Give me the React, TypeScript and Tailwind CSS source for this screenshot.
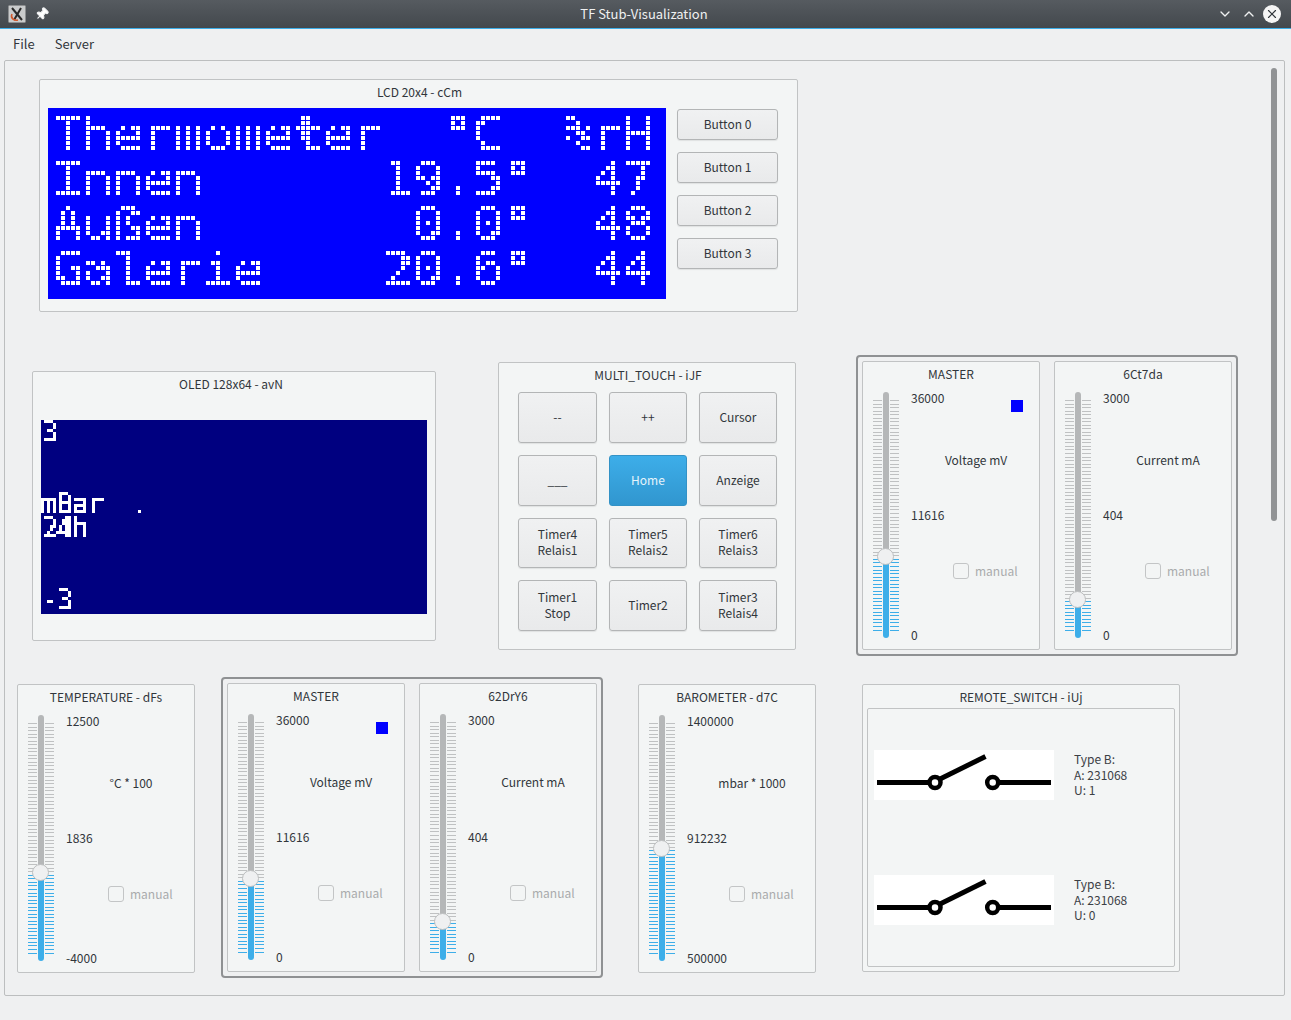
import React from 'react';
import { Pin, X, ChevronDown, ChevronUp } from 'lucide-react';

const TICK_COUNT = 66;

// vertical tick ladder next to a slider, blue below the handle
const Ticks: React.FC<{ fraction: number }> = ({ fraction }) => (
  <div className="flex flex-col justify-between w-[9px] h-[231px] mt-[8px]">
    {Array.from({ length: TICK_COUNT }).map((_, i) => (
      <div
        key={i}
        className={i / (TICK_COUNT - 1) > 1 - fraction ? 'h-px bg-[#3daee9]' : 'h-px bg-[#bfc1c2]'}
      />
    ))}
  </div>
);

const Slider: React.FC<{ fraction: number }> = ({ fraction }) => (
  <div className="relative flex gap-px w-[26px] h-[246px] mt-[2px]">
    <Ticks fraction={fraction} />
    <div className="flex flex-col w-[6px] h-[246px] rounded-full overflow-hidden">
      <div className="flex-1 bg-[#b5b7b8]" />
      <div className="bg-[#3daee9]" style={{ height: Math.round(7 + fraction * 231) }} />
    </div>
    <Ticks fraction={fraction} />
    <div
      className="absolute left-[4px] w-[17px] h-[17px] rounded-full bg-[#eff0f1] border border-[#bcbebf]"
      style={{ top: Math.round(239 - fraction * 231 - 8.5) }}
    />
  </div>
);

interface GaugeProps {
  title: string;
  max: string;
  unit: string;
  value: string;
  min: string;
  fraction: number;
  marker?: boolean;
  className?: string;
}

const Gauge: React.FC<GaugeProps> = ({ title, max, unit, value, min, fraction, marker, className }) => (
  <div className={`w-[178px] h-[289px] shrink-0 border border-[#c1c3c4] rounded-[2px] bg-[#f3f5f5] ${className ?? ''}`}>
    <div className="h-[24px] mb-[4px] flex items-center justify-center">{title}</div>
    <div className="flex pl-[10px] gap-[12px]">
      <Slider fraction={fraction} />
      <div className="flex flex-col w-[130px]">
        <div className="flex justify-between h-4 leading-4">
          <span>{max}</span>
          {marker && <span className="w-[12px] h-[12px] mt-[10px] mr-[16px] bg-[#0000ff]" />}
        </div>
        <div className="h-4 leading-4 mt-[46px] pl-[2px] text-center">{unit}</div>
        <div className="h-4 leading-4 mt-[39px]">{value}</div>
        <div className="flex items-center h-4 leading-4 mt-[40px] ml-[42px] gap-[6px] text-[#a9abac]">
          <span className="w-[16px] h-[16px] rounded-[3px] border border-[#c3c5c6] bg-[#f3f5f5]" />
          manual
        </div>
        <div className="h-4 leading-4 mt-[48px]">{min}</div>
      </div>
    </div>
  </div>
);

const MasterGroup: React.FC<{ title2: string; className?: string; fraction2: number }> = ({ title2, className, fraction2 }) => (
  <div className={`flex gap-[14px] w-[382px] h-[301px] shrink-0 p-[4px] border-2 border-[#8f9193] rounded-[4px] ${className ?? ''}`}>
    <Gauge title="MASTER" max="36000" unit="Voltage mV" value="11616" min="0" fraction={0.3227} marker />
    <Gauge title={title2} max="3000" unit="Current mA" value="404" min="0" fraction={fraction2} />
  </div>
);

const TouchButton: React.FC<{ label: string; active?: boolean }> = ({ label, active }) => (
  <div
    className={
      active
        ? 'flex items-center justify-center text-center leading-4 pb-[2px] rounded-[3px] border border-[#3392c6] bg-gradient-to-b from-[#3daee9] to-[#3196cf] text-[#e6f4fb]'
        : 'flex items-center justify-center text-center leading-4 pb-[2px] rounded-[3px] border border-[#b3b5b6] bg-gradient-to-b from-[#f0f1f2] to-[#e9eaeb] shadow-[0_1px_1px_rgba(0,0,0,0.08)] whitespace-pre-line'
    }
  >
    {label}
  </div>
);

const SwitchDrawing: React.FC = () => (
  <svg width="180" height="50" viewBox="0 0 180 50" className="bg-white shrink-0">
    <path d="M3 32.5H54M125.5 32.5H177" stroke="#000" strokeWidth="5" fill="none" />
    <path d="M66 29L111.5 6.5" stroke="#000" strokeWidth="5" fill="none" />
    <circle cx="61" cy="32.5" r="5.5" stroke="#000" strokeWidth="4.5" fill="#fff" />
    <circle cx="118.7" cy="32.5" r="5.5" stroke="#000" strokeWidth="4.5" fill="#fff" />
  </svg>
);

const RemoteRow: React.FC<{ state: string; className?: string }> = ({ state, className }) => (
  <div className={`flex items-center gap-[20px] ml-[6px] ${className ?? ''}`}>
    <SwitchDrawing />
    <div className="leading-[15.7px] text-[#3b4045] pb-px">
      <div>Type B:</div>
      <div>A: 231068</div>
      <div>U: {state}</div>
    </div>
  </div>
);

const App: React.FC = () => {
  const lcdLines = [
    'Thermometer  °C  %rH',
    'Innen      19.5°  47',
    'Außen       0.0°  48',
    'Galerie    20.6°  44',
  ];

  return (
    <div className="w-[1291px] h-[1020px] overflow-hidden flex flex-col bg-[#eff0f1] text-[#31363b] text-[12px] [font-family:'Noto_Sans_CJK_SC',sans-serif]">
      {/* real text, sampled onto the display's dot grid */}
      <svg className="absolute w-0 h-0">
        <defs>
          <filter id="lcdDots" x="0" y="0" width="1" height="1" colorInterpolationFilters="sRGB">
            <feFlood x="2" y="2" width="1" height="1" floodColor="#fff" />
            <feComposite width="5" height="5" />
            <feTile result="sample" />
            <feComposite in="SourceGraphic" in2="sample" operator="in" />
            <feComponentTransfer>
              <feFuncA type="discrete" tableValues="0 1 1 1" />
            </feComponentTransfer>
            <feMorphology operator="dilate" radius="2" result="big" />
            <feFlood x="0" y="0" width="4" height="4" floodColor="#fff" />
            <feComposite width="5" height="5" />
            <feTile result="cell" />
            <feComposite in="big" in2="cell" operator="in" />
          </filter>
          <filter id="oledDots" x="0" y="0" width="1" height="1" colorInterpolationFilters="sRGB">
            <feFlood x="1" y="1" width="1" height="1" floodColor="#fff" />
            <feComposite width="3" height="3" />
            <feTile result="sample" />
            <feComposite in="SourceGraphic" in2="sample" operator="in" />
            <feComponentTransfer>
              <feFuncA type="discrete" tableValues="0 1 1 1" />
            </feComponentTransfer>
            <feMorphology operator="dilate" radius="1" />
          </filter>
        </defs>
      </svg>

      {/* title bar */}
      <div className="h-[29px] shrink-0 flex items-center border-b border-[#3daee9] bg-gradient-to-b from-[#565b60] to-[#43484d] text-[#eff0f1] text-[13px]">
        <svg width="18" height="18" viewBox="0 0 18 18" className="ml-[8px] mb-px">
          <rect x="0.5" y="0.5" width="17" height="17" rx="1" fill="#c9cbcc" stroke="#8d8f91" />
          <path d="M4 3L14 15M13 3L6 15" stroke="#2a2a2a" strokeWidth="2" fill="none" />
          <path d="M4 9C2 13 6 16 10 15" stroke="#d2572a" strokeWidth="1.5" fill="none" />
        </svg>
        <Pin size={14} fill="#fff" className="ml-[9px] rotate-45" />
        <div className="flex-1 text-center pl-[22px]">TF Stub-Visualization</div>
        <ChevronDown size={16} className="mr-[8px]" />
        <ChevronUp size={16} className="mr-[6px]" />
        <div className="w-[18px] h-[18px] mr-[10px] rounded-full bg-[#f5f5f5] flex items-center justify-center">
          <X size={14} className="text-[#31363b]" />
        </div>
      </div>

      {/* menu */}
      <div className="h-[31px] shrink-0 flex items-center gap-[20px] pl-[13px] pb-[2px] text-[13px]">
        <span>File</span>
        <span>Server</span>
      </div>

      {/* scroll area */}
      <div className="relative w-[1281px] h-[936px] ml-[4px] border border-[#bcbebf] rounded-[2px]">
        <div className="absolute left-[1266px] top-[7px] w-[6px] h-[453px] rounded-full bg-[#919395]" />

        {/* LCD */}
        <div className="w-[759px] h-[233px] mt-[18px] ml-[34px] border border-[#c1c3c4] rounded-[2px] bg-[#f3f5f5]">
          <div className="h-[24px] mb-[4px] flex items-center justify-center pl-[2px]">LCD 20x4 - cCm</div>
          <div className="flex pl-[8px]">
            <div className="w-[618px] h-[191px] bg-[#0000ff] pl-[8px] pt-[3px]">
              <div className="w-[600px] h-[185px] pt-px text-white text-[46.6px] leading-[45px] tracking-[-0.78px] whitespace-pre [font-family:'DejaVu_Sans_Mono',monospace] [filter:url(#lcdDots)]">
                <div className="-ml-[3px] origin-left scale-x-[1.1]">
                  {lcdLines.map((line) => (
                    <div key={line}>{line}</div>
                  ))}
                </div>
              </div>
            </div>
            <div className="flex flex-col gap-[12px] ml-[11px] mt-px">
              {['Button 0', 'Button 1', 'Button 2', 'Button 3'].map((label) => (
                <div
                  key={label}
                  className="w-[101px] h-[31px] pb-[2px] flex items-center justify-center rounded-[3px] border border-[#b3b5b6] bg-gradient-to-b from-[#f0f1f2] to-[#e9eaeb] shadow-[0_1px_1px_rgba(0,0,0,0.08)]"
                >
                  {label}
                </div>
              ))}
            </div>
          </div>
        </div>

        {/* middle row */}
        <div className="flex items-start mt-[43px]">
          <div className="w-[404px] h-[270px] shrink-0 mt-[16px] ml-[27px] border border-[#c1c3c4] rounded-[2px] bg-[#f3f5f5] pl-[8px]">
            <div className="h-[24px] flex items-center justify-center pr-[14px]">OLED 128x64 - avN</div>
            <div className="relative w-[386px] h-[194px] mt-[24px] bg-[#000080]">
              <div className="w-[386px] h-[194px] text-white text-[29px] leading-[24px] tracking-[-2.46px] whitespace-pre [font-family:'DejaVu_Sans_Mono',monospace] [filter:url(#oledDots)]">
                <div>3</div>
                <div className="mt-[48px]">mBar</div>
                <div>24h</div>
                <div className="mt-[48px]">-3</div>
              </div>
              <div className="absolute left-[97px] top-[90px] w-[3px] h-[3px] bg-white" />
            </div>
          </div>

          <div className="w-[298px] h-[288px] shrink-0 mt-[7px] ml-[62px] border border-[#c1c3c4] rounded-[2px] bg-[#f3f5f5] pl-[19px]">
            <div className="h-[24px] mb-[5px] flex items-center justify-center pr-[17px]">MULTI_TOUCH - iJF</div>
            <div className="grid grid-cols-[79px_78px_78px] grid-rows-[51px_51px_50px_51px] gap-[12px]">
              <TouchButton label="--" />
              <TouchButton label="++" />
              <TouchButton label="Cursor" />
              <TouchButton label="___" />
              <TouchButton label="Home" active />
              <TouchButton label="Anzeige" />
              <TouchButton label={'Timer4\nRelais1'} />
              <TouchButton label={'Timer5\nRelais2'} />
              <TouchButton label={'Timer6\nRelais3'} />
              <TouchButton label={'Timer1\nStop'} />
              <TouchButton label="Timer2" />
              <TouchButton label={'Timer3\nRelais4'} />
            </div>
          </div>

          <MasterGroup title2="6Ct7da" fraction2={0.1347} className="ml-[60px]" />
        </div>

        {/* bottom row */}
        <div className="flex items-start mt-[21px]">
          <Gauge
            title="TEMPERATURE - dFs"
            max="12500"
            unit="°C * 100"
            value="1836"
            min="-4000"
            fraction={0.3537}
            className="mt-[7px] ml-[12px]"
          />
          <MasterGroup title2="62DrY6" fraction2={0.1347} className="ml-[26px]" />
          <Gauge
            title="BAROMETER - d7C"
            max="1400000"
            unit="mbar * 1000"
            value="912232"
            min="500000"
            fraction={0.458}
            className="mt-[7px] ml-[35px]"
          />
          <div className="w-[318px] h-[288px] shrink-0 mt-[7px] ml-[46px] border border-[#c1c3c4] rounded-[2px] bg-[#f3f5f5] px-[4px]">
            <div className="h-[23px] flex items-center justify-center">REMOTE_SWITCH - iUj</div>
            <div className="h-[259px] border border-[#c1c3c4] rounded-[2px] pt-[41px]">
              <RemoteRow state="1" />
              <RemoteRow state="0" className="mt-[75px]" />
            </div>
          </div>
        </div>
      </div>
    </div>
  );
};

export default App;
